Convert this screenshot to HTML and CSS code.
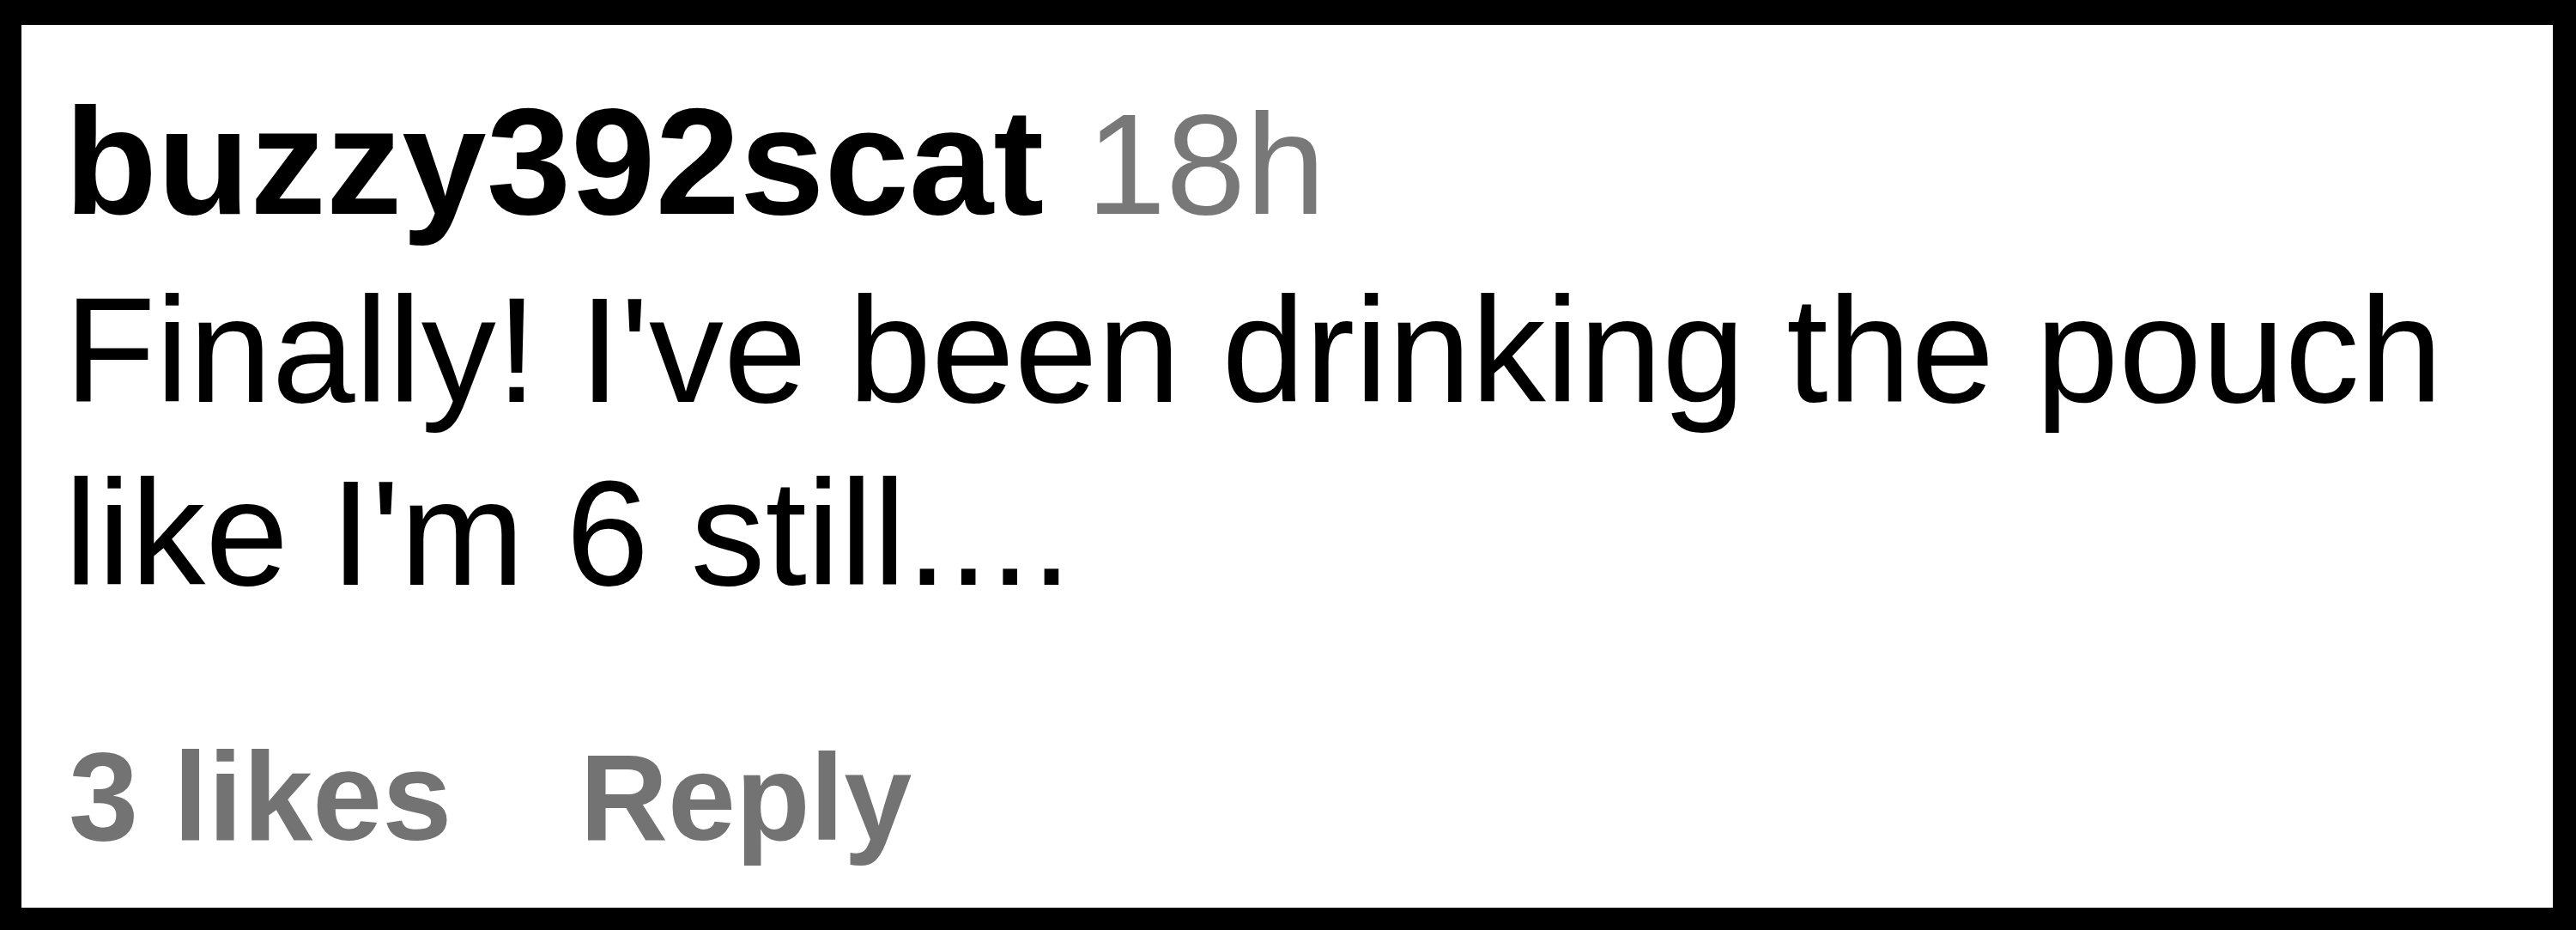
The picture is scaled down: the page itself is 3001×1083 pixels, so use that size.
FILE: index.html
```html
<!DOCTYPE html>
<html>
<head>
<meta charset="utf-8">
<link rel="stylesheet" href="styles.css">
</head>
<body>
<div class="frame">
  <div class="comment">
    <div class="header"><span class="user">buzzy392scat</span> <span class="time">18h</span></div>
    <div class="text">Finally! I've been drinking the pouch<br>like I'm 6 still....</div>
    <div class="actions"><span class="likes">3 likes</span><span class="reply">Reply</span></div>
  </div>
</div>
</body>
</html>
```
FILE: styles.css
```css
html, body {
  margin: 0;
  padding: 0;
  background: #000;
}
.frame {
  width: 3001px;
  height: 1083px;
  box-sizing: border-box;
  background: #000;
  padding: 29px 27px 26px 25px;
}
.comment {
  background: #fff;
  height: 100%;
  box-sizing: border-box;
  padding: 52px 0 0 50px;
  font-family: "Liberation Sans", Arial, sans-serif;
  color: #000;
}
.header {
  font-size: 177px;
  line-height: 214px;
  white-space: nowrap;
}
.user {
  font-weight: 700;
}
.time {
  color: #787878;
  font-weight: 400;
  font-size: 167px;
}
.text {
  margin-top: 3px;
  font-size: 174px;
  line-height: 213px;
  white-space: nowrap;
}
.actions {
  margin-top: 111px;
  padding-left: 5px;
  display: flex;
  align-items: baseline;
  gap: 149px;
  font-size: 146px;
  line-height: 180px;
  font-weight: 700;
  color: #737373;
}
.reply {
  font-size: 142px;
}
```
